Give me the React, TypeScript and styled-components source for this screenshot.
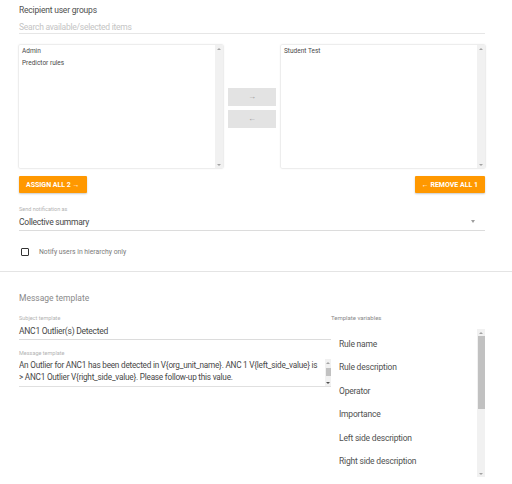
import React from 'react';
import styled, { createGlobalStyle } from 'styled-components';

const GlobalStyle = createGlobalStyle`
  html, body {
    margin: 0;
    padding: 0;
    background: #ffffff;
  }
  body {
    font-family: Roboto, "Liberation Sans", sans-serif;
    color: #333;
  }
`;

const Page = styled.div`
  width: 512px;
  height: 484px;
  overflow: hidden;
  background: #fff;
`;

const Section = styled.div`
  padding: 0 27px 0 19px;
`;

const SectionTitle = styled.div<{ $muted?: boolean }>`
  font-size: 8.5px;
  letter-spacing: ${p => (p.$muted ? '0' : '-0.2px')};
  line-height: 12px;
  color: ${p => (p.$muted ? '#8a8a8a' : '#505050')};
  padding-top: ${p => (p.$muted ? '20px' : '4px')};
`;

const SearchField = styled.div`
  margin-top: 5px;
  height: 12px;
  font-size: 8.5px;
  letter-spacing: -0.25px;
  line-height: 12px;
  color: #c4c4c4;
  border-bottom: 1px solid #e6e6e6;
`;

const TransferRow = styled.div`
  display: grid;
  grid-template-columns: 204px 1fr 204px;
  margin-top: 11px;
  height: 123px;
`;

const ListBox = styled.div`
  display: flex;
  background: #fff;
  box-shadow: 0 0 2px rgba(0, 0, 0, 0.28);
  border-radius: 1px;
  overflow: hidden;
`;

const ListItems = styled.div`
  flex: 1;
  padding: 1px 3px;
`;

const ListItem = styled.div`
  font-size: 6.5px;
  line-height: 11.5px;
  color: #4a4a4a;
`;

const ScrollTrack = styled.div<{ $width: number }>`
  width: ${p => p.$width}px;
  background: #f1f1f1;
  display: flex;
  flex-direction: column;
  align-items: center;
`;

const ScrollArrow = styled.div<{ $down?: boolean; $dark?: boolean }>`
  height: 7px;
  display: flex;
  align-items: center;
  justify-content: center;
  &::after {
    content: '';
    border-left: 2px solid transparent;
    border-right: 2px solid transparent;
    ${p => (p.$down ? 'border-top' : 'border-bottom')}: 2px solid ${p => (p.$dark ? '#505050' : '#a3a3a3')};
  }
`;

const ScrollBody = styled.div`
  flex: 1;
  width: 100%;
  display: flex;
  flex-direction: column;
  align-items: center;
`;

const ScrollThumb = styled.div<{ $size: number }>`
  width: calc(100% - 1px);
  height: ${p => p.$size}px;
  background: #c1c1c1;
`;

const MiddleColumn = styled.div`
  display: flex;
  flex-direction: column;
  justify-content: center;
  gap: 4px;
  padding: 2px 5px 0;
`;

const MoveButton = styled.div`
  height: 18px;
  background: #e3e3e3;
  display: flex;
  align-items: center;
  justify-content: center;
  font-size: 8px;
  color: #9a9a9a;
`;

const ActionRow = styled.div`
  display: flex;
  justify-content: space-between;
  margin-top: 8px;
`;

const OrangeButton = styled.div`
  height: 17px;
  padding: 0 7px;
  background: #ff9800;
  color: #fff;
  font-size: 7px;
  font-weight: 700;
  display: flex;
  align-items: center;
  box-shadow: 0 1px 2px rgba(0, 0, 0, 0.22);
  border-radius: 1px;
`;

const Field = styled.div<{ $top: number }>`
  margin-top: ${p => p.$top}px;
`;

const FieldLabel = styled.div`
  font-size: 5.5px;
  line-height: 7px;
  color: #b3b3b3;
`;

const FieldValue = styled.div`
  position: relative;
  font-size: 8.5px;
  letter-spacing: -0.25px;
  line-height: 12px;
  color: #474747;
  padding: 3px 0 2px;
  border-bottom: 1px solid #dcdcdc;
`;

const DropArrow = styled.span`
  position: absolute;
  right: 10px;
  top: 7px;
  border-left: 2.5px solid transparent;
  border-right: 2.5px solid transparent;
  border-top: 3px solid #9e9e9e;
`;

const CheckRow = styled.div`
  display: flex;
  align-items: center;
  gap: 10px;
  margin-top: 16px;
  padding-left: 2px;
  height: 10px;
`;

const CheckBox = styled.div`
  width: 6px;
  height: 6px;
  border: 1.5px solid #333;
  border-radius: 1px;
`;

const CheckLabel = styled.div`
  font-size: 6.8px;
  color: #7a7a7a;
`;

const Divider = styled.div`
  margin-top: 14px;
  border-top: 1.5px solid #e4e4e4;
`;

const TemplateGrid = styled.div`
  display: grid;
  grid-template-columns: 312px 1fr;
  margin-top: 10px;
`;

const FieldsColumn = styled.div`
  padding-top: 1px;
`;

const TextAreaRow = styled.div`
  display: flex;
  gap: 1px;
  border-bottom: 1.5px solid #e0e0e0;
  padding-top: 2px;
`;

const TextAreaText = styled.div`
  flex: 1;
  min-width: 0;
  overflow: hidden;
  white-space: nowrap;
  font-size: 8.2px;
  letter-spacing: -0.22px;
  line-height: 12px;
  color: #474747;
  padding-bottom: 3px;
`;

const VarsColumn = styled.div`
  display: flex;
  flex-direction: column;
`;

const VarsLabel = styled.div`
  font-size: 6px;
  line-height: 7px;
  color: #8a8a8a;
`;

const VarsList = styled.div`
  display: flex;
  margin-top: 8px;
  height: 148px;
`;

const VarsItems = styled.div`
  flex: 1;
  padding: 4px 8px 0;
`;

const VarItem = styled.div`
  font-size: 8.5px;
  letter-spacing: -0.2px;
  line-height: 23.4px;
  color: #505050;
`;

const Scrollbar: React.FC<{ width: number; thumbTop?: number; thumb?: number; dark?: boolean }> = ({
  width,
  thumbTop = 0,
  thumb = 0,
  dark,
}) => (
  <ScrollTrack $width={width}>
    <ScrollArrow />
    <ScrollBody>
      {thumb > 0 && <div style={{ height: thumbTop }} />}
      {thumb > 0 && <ScrollThumb $size={thumb} />}
    </ScrollBody>
    <ScrollArrow $down $dark={dark} />
  </ScrollTrack>
);

const variables = [
  'Rule name',
  'Rule description',
  'Operator',
  'Importance',
  'Left side description',
  'Right side description',
];

const App: React.FC = () => (
  <Page>
    <GlobalStyle />
    <Section>
      <SectionTitle>Recipient user groups</SectionTitle>
      <SearchField>Search available/selected items</SearchField>
      <TransferRow>
        <ListBox>
          <ListItems>
            <ListItem>Admin</ListItem>
            <ListItem>Predictor rules</ListItem>
          </ListItems>
          <Scrollbar width={8} />
        </ListBox>
        <MiddleColumn>
          <MoveButton>→</MoveButton>
          <MoveButton>←</MoveButton>
        </MiddleColumn>
        <ListBox>
          <ListItems>
            <ListItem>Student Test</ListItem>
          </ListItems>
          <Scrollbar width={8} />
        </ListBox>
      </TransferRow>
      <ActionRow>
        <OrangeButton>ASSIGN ALL 2 →</OrangeButton>
        <OrangeButton>← REMOVE ALL 1</OrangeButton>
      </ActionRow>
      <Field $top={13}>
        <FieldLabel>Send notification as</FieldLabel>
        <FieldValue>
          Collective summary
          <DropArrow />
        </FieldValue>
      </Field>
      <CheckRow>
        <CheckBox />
        <CheckLabel>Notify users in hierarchy only</CheckLabel>
      </CheckRow>
    </Section>
    <Divider />
    <Section>
      <SectionTitle $muted>Message template</SectionTitle>
      <TemplateGrid>
        <FieldsColumn>
          <Field $top={0}>
            <FieldLabel>Subject template</FieldLabel>
            <FieldValue>ANC1 Outlier(s) Detected</FieldValue>
          </Field>
          <Field $top={10}>
            <FieldLabel>Message template</FieldLabel>
            <TextAreaRow>
              <TextAreaText>
                An Outlier for ANC1 has been detected in V{'{'}org_unit_name{'}'}. ANC 1 V{'{'}left_side_value{'}'} is
                <br />
                &gt; ANC1 Outlier V{'{'}right_side_value{'}'}. Please follow-up this value.
              </TextAreaText>
              <Scrollbar width={6} thumbTop={2} thumb={8} dark />
            </TextAreaRow>
          </Field>
        </FieldsColumn>
        <VarsColumn>
          <VarsLabel>Template variables</VarsLabel>
          <VarsList>
            <VarsItems>
              {variables.map(v => (
                <VarItem key={v}>{v}</VarItem>
              ))}
            </VarsItems>
            <Scrollbar width={8} thumbTop={0} thumb={73} />
          </VarsList>
        </VarsColumn>
      </TemplateGrid>
    </Section>
  </Page>
);

export default App;
